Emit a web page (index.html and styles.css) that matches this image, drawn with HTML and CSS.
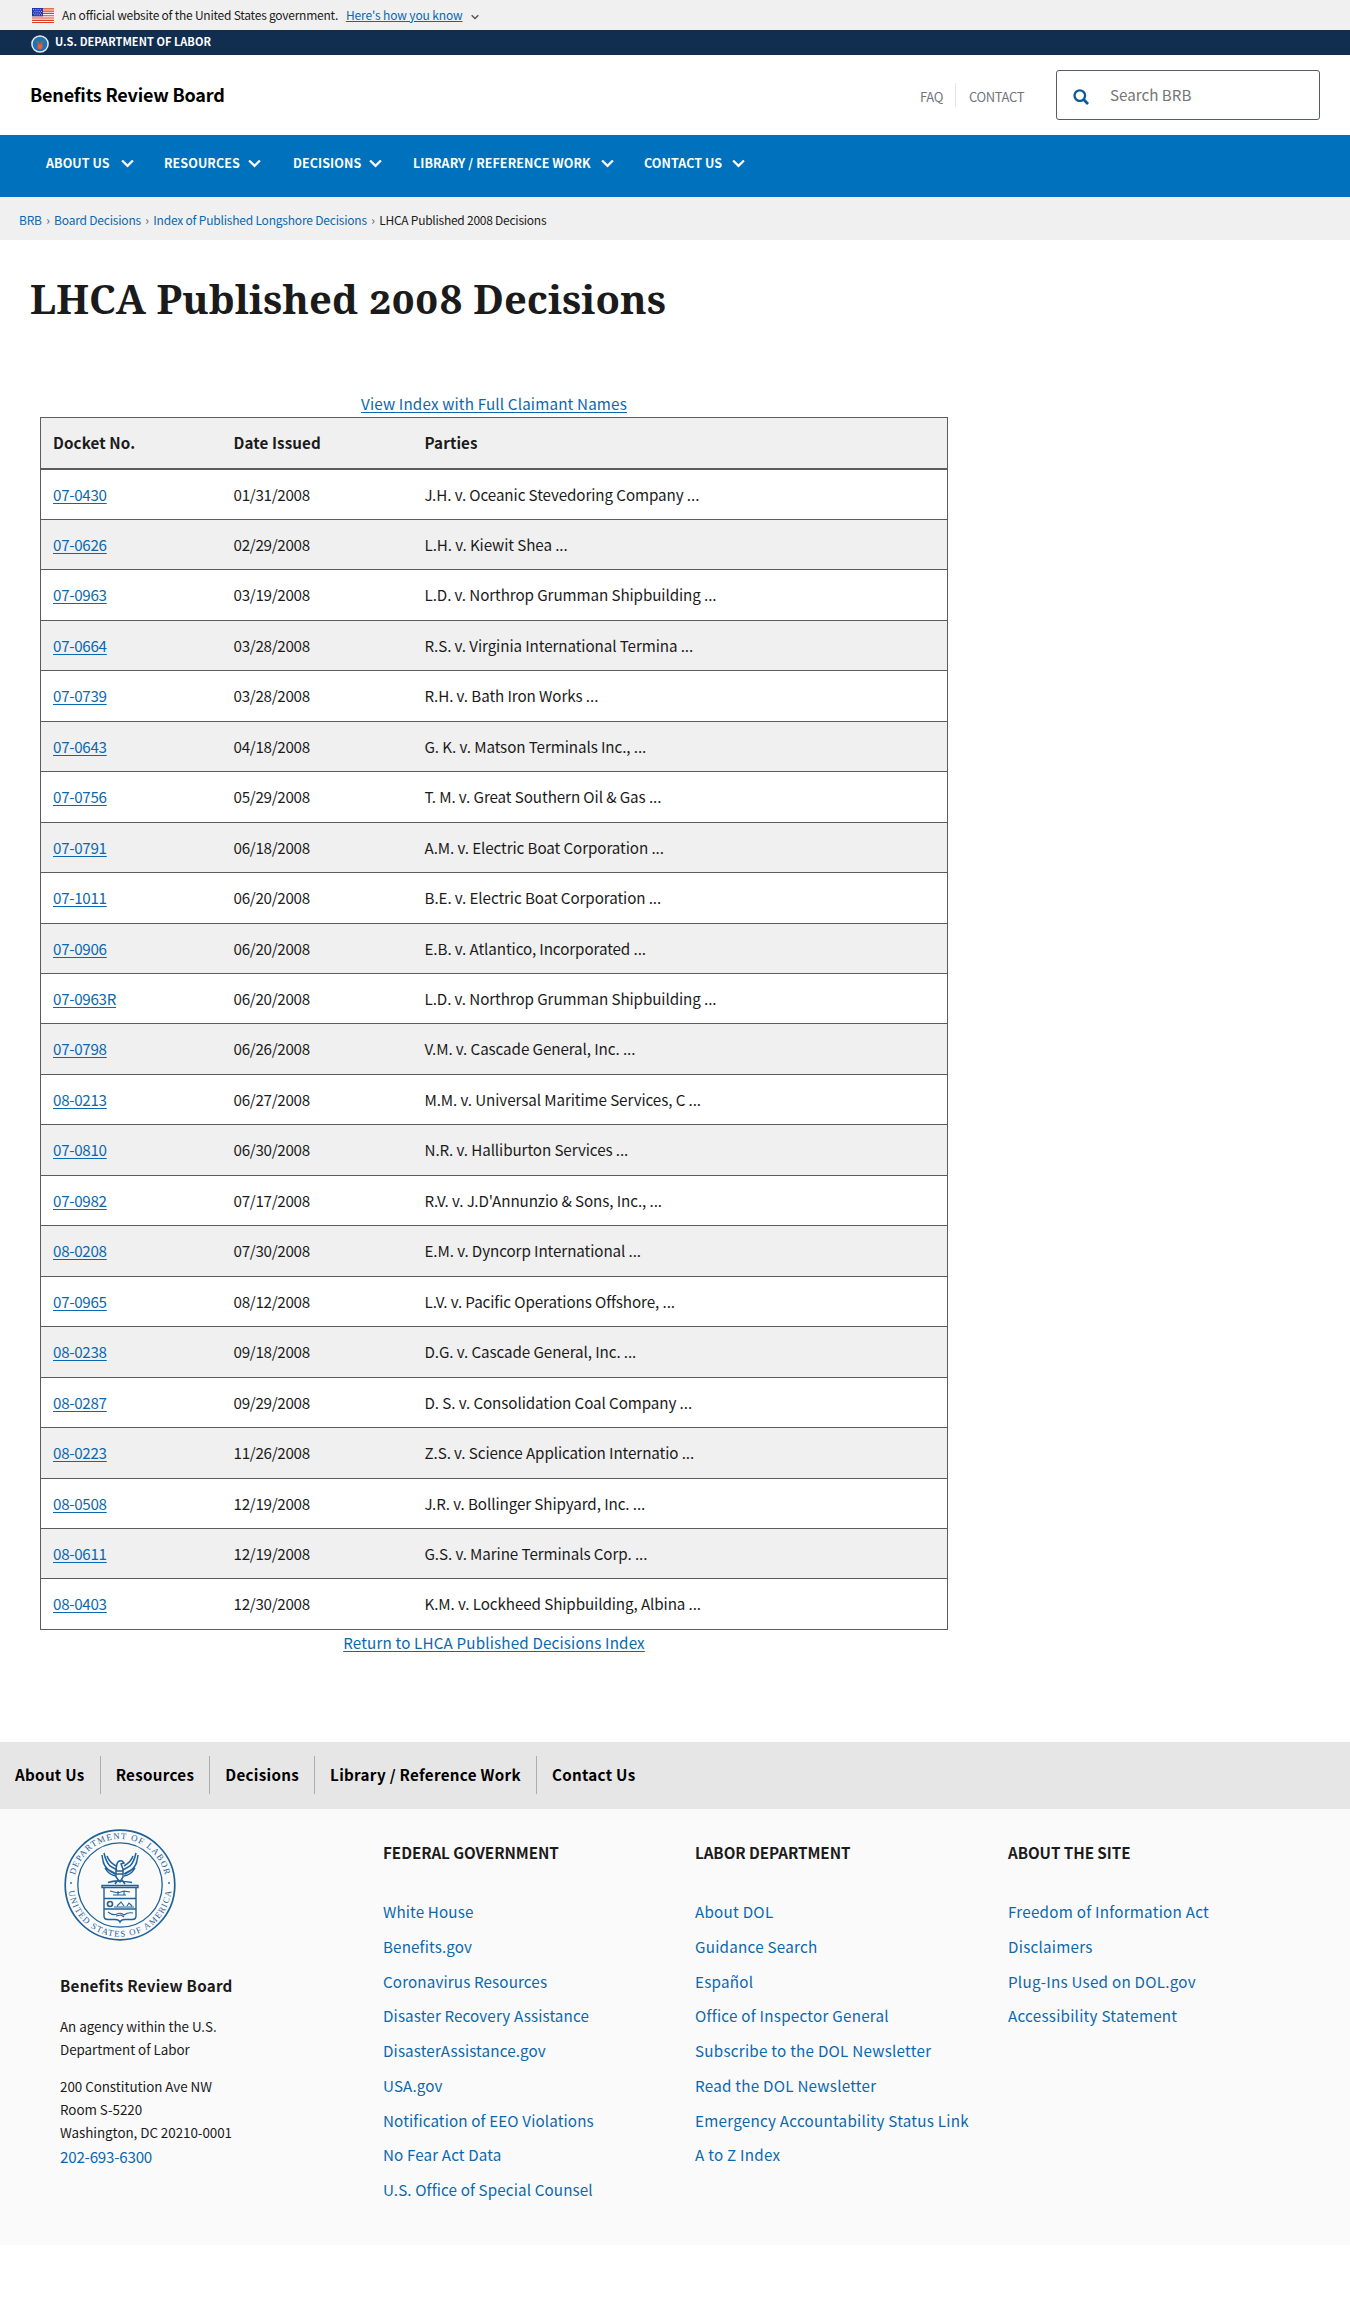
FILE: index.html
```
<!DOCTYPE html>
<html lang="en">
<head>
<meta charset="utf-8">
<title>LHCA Published 2008 Decisions</title>
<link rel="stylesheet" href="styles.css">
</head>
<body>
<svg class="defs" width="0" height="0" aria-hidden="true">
  <symbol id="chevron" viewBox="0 0 12 8"><path d="M1 1.2 L6 6.2 L11 1.2" fill="none" stroke="currentColor" stroke-width="2.1"/></symbol>
</svg>

<div class="gov-banner">
  <svg class="flag" viewBox="0 0 22 15">
    <rect width="22" height="15" fill="#fff"/>
    <path d="M0 .8h22M0 3.1h22M0 5.4h22M0 7.7h22M0 10h22M0 12.3h22M0 14.5h22" stroke="#db3e1f" stroke-width="1.15"/>
    <rect width="11" height="8.3" fill="#1e33b1"/>
    <path d="M1.2 1.7h9M2.4 3.4h8M1.2 5.1h9M2.4 6.8h8" stroke="#fff" stroke-width=".8" stroke-dasharray=".9 1.3"/>
  </svg>
  <span class="gov-text">An official website of the United States government.</span>
  <a class="gov-link" href="#">Here's how you know</a>
  <svg class="gov-chevron"><use href="#chevron"/></svg>
</div>

<div class="dol-bar">
  <svg class="dol-seal" viewBox="0 0 18 18">
    <circle cx="9" cy="9" r="8.1" fill="#1d72b8" stroke="#e4e9ee" stroke-width="1.5"/>
    <path d="M6.600 9h4.800v4.200L9 14.500l-2.400-1.300z" fill="#ee5a3a"/>
    <path d="M5.200 5.500 9 8l3.800-2.500-1.200 4H6.400z" fill="#8a6a4a"/>
    <circle cx="9" cy="5.200" r="1.300" fill="#3b7a52"/>
  </svg>
  <span>U.S. DEPARTMENT OF LABOR</span>
</div>

<header class="header">
  <a class="site-name" href="#">Benefits Review Board</a>
  <div class="header-tools">
    <a class="tool faq" href="#">FAQ</a>
    <a class="tool contact" href="#">CONTACT</a>
    <div class="search">
      <svg class="search-icon" viewBox="0 0 16 16"><circle cx="6.8" cy="6.6" r="5.3" fill="none" stroke="#0b5a98" stroke-width="2.3"/><path d="M10.6 10.6 15 15" stroke="#0b5a98" stroke-width="2.8"/></svg>
      <span>Search BRB</span>
    </div>
  </div>
</header>

<nav class="main-nav">
  <a class="n1" href="#">ABOUT US<svg><use href="#chevron"/></svg></a>
  <a class="n2" href="#">RESOURCES<svg><use href="#chevron"/></svg></a>
  <a class="n3" href="#">DECISIONS<svg><use href="#chevron"/></svg></a>
  <a class="n4" href="#">LIBRARY / REFERENCE WORK<svg><use href="#chevron"/></svg></a>
  <a class="n5" href="#">CONTACT US<svg><use href="#chevron"/></svg></a>
</nav>

<div class="breadcrumb">
  <a href="#">BRB</a><i>›</i><a href="#">Board Decisions</a><i>›</i><a href="#">Index of Published Longshore Decisions</a><i>›</i><span>LHCA Published 2008 Decisions</span>
</div>

<main class="main">
  <h1>LHCA Published 2008 Decisions</h1>
  <div class="content">
    <p class="above"><a href="#">View Index with Full Claimant Names</a></p>
    <table>
      <thead><tr><th class="c1">Docket No.</th><th class="c2">Date Issued</th><th>Parties</th></tr></thead>
      <tbody>
        <tr><td><a href="#">07-0430</a></td><td>01/31/2008</td><td>J.H. v. Oceanic Stevedoring Company ...</td></tr>
        <tr><td><a href="#">07-0626</a></td><td>02/29/2008</td><td>L.H. v. Kiewit Shea ...</td></tr>
        <tr><td><a href="#">07-0963</a></td><td>03/19/2008</td><td>L.D. v. Northrop Grumman Shipbuilding ...</td></tr>
        <tr><td><a href="#">07-0664</a></td><td>03/28/2008</td><td>R.S. v. Virginia International Termina ...</td></tr>
        <tr><td><a href="#">07-0739</a></td><td>03/28/2008</td><td>R.H. v. Bath Iron Works ...</td></tr>
        <tr><td><a href="#">07-0643</a></td><td>04/18/2008</td><td>G. K. v. Matson Terminals Inc., ...</td></tr>
        <tr><td><a href="#">07-0756</a></td><td>05/29/2008</td><td>T. M. v. Great Southern Oil &amp; Gas ...</td></tr>
        <tr><td><a href="#">07-0791</a></td><td>06/18/2008</td><td>A.M. v. Electric Boat Corporation ...</td></tr>
        <tr><td><a href="#">07-1011</a></td><td>06/20/2008</td><td>B.E. v. Electric Boat Corporation ...</td></tr>
        <tr><td><a href="#">07-0906</a></td><td>06/20/2008</td><td>E.B. v. Atlantico, Incorporated ...</td></tr>
        <tr><td><a href="#">07-0963R</a></td><td>06/20/2008</td><td>L.D. v. Northrop Grumman Shipbuilding ...</td></tr>
        <tr><td><a href="#">07-0798</a></td><td>06/26/2008</td><td>V.M. v. Cascade General, Inc. ...</td></tr>
        <tr><td><a href="#">08-0213</a></td><td>06/27/2008</td><td>M.M. v. Universal Maritime Services, C ...</td></tr>
        <tr><td><a href="#">07-0810</a></td><td>06/30/2008</td><td>N.R. v. Halliburton Services ...</td></tr>
        <tr><td><a href="#">07-0982</a></td><td>07/17/2008</td><td>R.V. v. J.D'Annunzio &amp; Sons, Inc., ...</td></tr>
        <tr><td><a href="#">08-0208</a></td><td>07/30/2008</td><td>E.M. v. Dyncorp International ...</td></tr>
        <tr><td><a href="#">07-0965</a></td><td>08/12/2008</td><td>L.V. v. Pacific Operations Offshore, ...</td></tr>
        <tr><td><a href="#">08-0238</a></td><td>09/18/2008</td><td>D.G. v. Cascade General, Inc. ...</td></tr>
        <tr><td><a href="#">08-0287</a></td><td>09/29/2008</td><td>D. S. v. Consolidation Coal Company ...</td></tr>
        <tr><td><a href="#">08-0223</a></td><td>11/26/2008</td><td>Z.S. v. Science Application Internatio ...</td></tr>
        <tr><td><a href="#">08-0508</a></td><td>12/19/2008</td><td>J.R. v. Bollinger Shipyard, Inc. ...</td></tr>
        <tr><td><a href="#">08-0611</a></td><td>12/19/2008</td><td>G.S. v. Marine Terminals Corp. ...</td></tr>
        <tr><td><a href="#">08-0403</a></td><td>12/30/2008</td><td>K.M. v. Lockheed Shipbuilding, Albina ...</td></tr>
      </tbody>
    </table>
    <p class="below"><a href="#">Return to LHCA Published Decisions Index</a></p>
  </div>
</main>

<nav class="footer-nav">
  <a href="#">About Us</a><a href="#">Resources</a><a href="#">Decisions</a><a href="#">Library / Reference Work</a><a href="#">Contact Us</a>
</nav>

<footer class="footer">
  <div class="agency">
    <svg class="seal" viewBox="0 0 112 112">
      <defs>
        <path id="arc-top" d="M10 56a46 46 0 0 1 92 0"/>
        <path id="arc-bottom" d="M4.300 56a51.700 51.700 0 0 0 103.400 0"/>
      </defs>
      <g fill="none" stroke="#1f6299">
        <circle cx="56" cy="56" r="54.8" stroke-width="1.7"/>
        <circle cx="56" cy="56" r="42.2" stroke-width="1.3"/>
        <path d="M38 56.5h36v2H38zM40 58.5V87q0 3.500 4 3.500h7q4 0 5 2.500 1-2.500 5-2.500h7q4 0 4-3.500V58.500M40 69.500h32M40 80h32" stroke-width="1.4"/>
        <path d="M44 53.500q6-2 12-1.500t12 1.500M54 51l-3 4M58 51l3 4" stroke-width="1.600"/>
        <path d="M38 26q1 9 5 14l9 5M40 24q2 9 6 13l7 4M43 27q2 6 9 10M39 33q3 8 12 12M41 39q4 7 11 8M74 26q-1 9-5 14l-9 5M72 24q-2 9-6 13l-7 4M69 27q-2 6-9 10M73 33q-3 8-12 12M71 39q-4 7-11 8" stroke-width="1.500"/>
        <path d="M53 35q1-4 5-3l2 2-3 1 2 5v8l-3 5-4-5v-8zM52 42h7M52 45h7" stroke-width="1.500"/>
        <path d="M46 62l8 2 6-2 6 1M49 66h13M54 62v4M60 62v4M50 78h20M53 77l4-4 3 4M63 77l2-3 3 3M44 83q5 4 9 2t7 1q4-3 9-2M52 87l5-1 3 2" stroke-width="1.100"/>
        <circle cx="46" cy="75" r="2.500" stroke-width="1.600"/>
      </g>
      <g fill="#1f6299"><circle cx="7" cy="54" r=".9"/><circle cx="105" cy="54" r=".9"/></g>
      <g class="seal-text">
        <text><textPath href="#arc-top" startOffset="50%" textLength="124">DEPARTMENT OF LABOR</textPath></text>
        <text><textPath href="#arc-bottom" startOffset="50%" textLength="150">UNITED STATES OF AMERICA</textPath></text>
      </g>
    </svg>
    <h2>Benefits Review Board</h2>
    <p class="small first">An agency within the U.S.<br>Department of Labor</p>
    <p class="small second">200 Constitution Ave NW<br>Room S-5220<br>Washington, DC 20210-0001</p>
    <a class="phone" href="#">202-693-6300</a>
  </div>
  <div class="links">
    <h3>FEDERAL GOVERNMENT</h3>
    <a href="#">White House</a><a href="#">Benefits.gov</a><a href="#">Coronavirus Resources</a><a href="#">Disaster Recovery Assistance</a><a href="#">DisasterAssistance.gov</a><a href="#">USA.gov</a><a href="#">Notification of EEO Violations</a><a href="#">No Fear Act Data</a><a href="#">U.S. Office of Special Counsel</a>
  </div>
  <div class="links wide">
    <h3>LABOR DEPARTMENT</h3>
    <a href="#">About DOL</a><a href="#">Guidance Search</a><a href="#">Español</a><a href="#">Office of Inspector General</a><a href="#">Subscribe to the DOL Newsletter</a><a href="#">Read the DOL Newsletter</a><a href="#">Emergency Accountability Status Link</a><a href="#">A to Z Index</a>
  </div>
  <div class="links wide">
    <h3>ABOUT THE SITE</h3>
    <a href="#">Freedom of Information Act</a><a href="#">Disclaimers</a><a href="#">Plug-Ins Used on DOL.gov</a><a href="#">Accessibility Statement</a>
  </div>
</footer>
</body>
</html>
```
FILE: styles.css
```
* { box-sizing: border-box; }
body {
  margin: 0;
  background: #fff;
  color: #1b1b1b;
  font-family: "Noto Sans CJK SC", "Open Sans", sans-serif;
  font-size: 15.2px;
  line-height: 25.5px;
}
a { color: #0b68ae; text-decoration: none; }
h1, h2, h3, p { margin: 0; }
.defs { position: absolute; }

.gov-banner {
  display: flex;
  align-items: center;
  height: 30px;
  padding-left: 32px;
  background: #f0f0f0;
  font-size: 12px;
  line-height: 16px;
}
.flag { width: 22px; height: 15px; margin-right: 8px; }
.gov-text { width: 284px; letter-spacing: -.233px; white-space: nowrap; }
.gov-link { width: 117px; letter-spacing: -.13px; text-decoration: underline; white-space: nowrap; }
.gov-chevron { width: 8px; height: 6px; margin-left: 8px; margin-top: 3px; color: #555; }

.dol-bar {
  display: flex;
  height: 25px;
  padding-left: 31px;
  background: #112e51;
  color: #fff;
  font-size: 11px;
  font-weight: 700;
  line-height: 22px;
  letter-spacing: .04px;
}
.dol-seal { width: 18px; height: 18px; margin: 5px 6px 0 0; }

.header {
  display: flex;
  justify-content: space-between;
  height: 80px;
  padding: 15px 30px 0;
}
.site-name { color: #000; font-size: 18px; font-weight: 700; line-height: 49px; letter-spacing: -.19px; }
.header-tools { display: flex; }
.tool { height: 24px; margin-top: 13px; color: #71767a; font-size: 13px; line-height: 28px; letter-spacing: -.38px; }
.faq { width: 36px; border-right: 1px solid #e6e6e6; }
.contact { width: 100px; padding-left: 13px; }
.search {
  display: flex;
  width: 264px;
  height: 50px;
  padding-left: 16px;
  border: 1px solid #565c65;
  border-radius: 3px;
  color: #757575;
  line-height: 47px;
}
.search-icon { width: 16px; height: 16px; margin: 18px 21px 0 0; }

.main-nav {
  display: flex;
  height: 62px;
  padding-left: 46px;
  background: #0071bc;
  line-height: 55px;
}
.main-nav a { display: flex; color: #fff; font-size: 12.5px; font-weight: 700; letter-spacing: .07px; white-space: nowrap; }
.main-nav svg { width: 13px; height: 9px; margin: 24px 0 0 auto; }
.n1 { width: 88px; margin-right: 30px; }
.n2 { width: 97px; margin-right: 32px; }
.n3 { width: 89px; margin-right: 31px; }
.n4 { width: 201px; margin-right: 30px; }
.n5 { width: 101px; }

.breadcrumb {
  display: flex;
  height: 43px;
  padding-left: 19px;
  background: #f0f0f0;
  font-size: 12px;
  line-height: 45px;
  letter-spacing: -.2px;
}
.breadcrumb i { width: 12.3px; font-style: normal; text-align: center; color: #565c65; }
.breadcrumb span { letter-spacing: -.25px; }

.main { height: 1502px; padding: 30px 0 0 30px; }
h1 {
  font-family: "Noto Serif", "Liberation Serif", serif;
  font-size: 40px;
  font-weight: 700;
  font-variant-numeric: oldstyle-nums;
  line-height: 57px;
  letter-spacing: .05px;
}
.content { width: 908px; margin: 64px 0 0 10px; }
.content a { text-decoration: underline; text-underline-offset: 2px; }
.above, .below { text-align: center; letter-spacing: .16px; }
table { width: 908px; border: 1px solid #5c5c5c; border-collapse: collapse; }
th { height: 52px; padding: 0 12px; background: #f0f0f0; border-bottom: 2px solid #5c5c5c; text-align: left; letter-spacing: .1px; }
td { height: 50.46px; padding: 0 12px; border-bottom: 1px solid #5c5c5c; letter-spacing: -.09px; }
td:first-child, td:nth-child(2) { letter-spacing: -.3px; }
tbody tr:nth-child(even) { background: #f0f0f0; }
.c1 { width: 181px; }
.c2 { width: 191px; }

.footer-nav {
  display: flex;
  height: 67px;
  padding-top: 14px;
  background: #e6e6e6;
}
.footer-nav a { height: 38px; padding: 0 15px; color: #000; font-weight: 700; line-height: 36px; letter-spacing: .29px; }
.footer-nav a + a { border-left: 1px solid #a9aeb1; }

.footer {
  display: grid;
  grid-template-columns: 323px 312px 313px 300px;
  height: 436px;
  padding: 20px 0 0 60px;
  background: #fafafa;
}
.seal { display: block; width: 112px; height: 112px; margin-left: 4px; }
.seal-text { fill: #1f6299; font: 400 8.8px "Liberation Serif", serif; text-anchor: middle; }
h2 { margin-top: 31px; font-size: 15.2px; line-height: 26px; letter-spacing: .24px; }
.small { font-size: 13.4px; line-height: 22.7px; letter-spacing: -.04px; }
.first { margin-top: 17px; }
.second { margin-top: 15px; }
.phone { letter-spacing: -.23px; }
.links { display: flex; flex-direction: column; }
.links a { height: 34.75px; line-height: 34.75px; letter-spacing: .13px; }
.wide a { letter-spacing: .25px; }
h3 { margin: 10px 0 29px; font-size: 15.2px; line-height: 26px; letter-spacing: -.05px; }
```
